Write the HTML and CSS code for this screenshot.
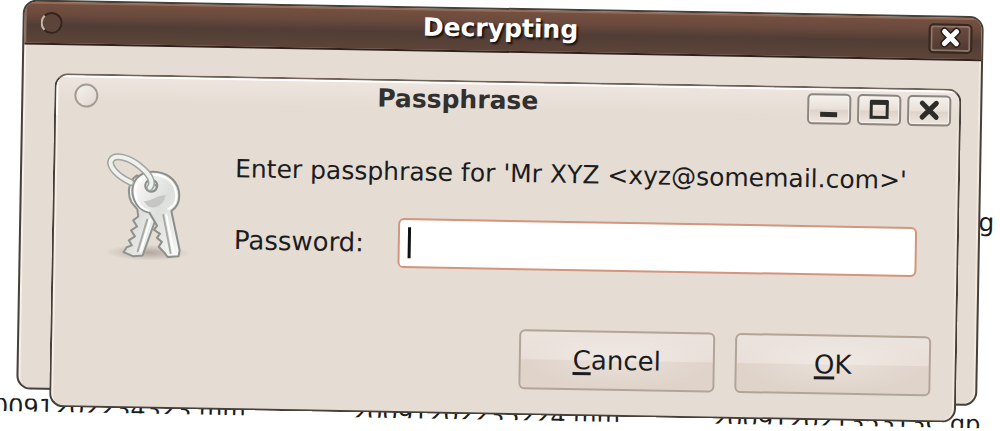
FILE: index.html
```html
<!DOCTYPE html>
<html lang="en">
<head>
<meta charset="utf-8">
<title>Passphrase</title>
<link rel="stylesheet" href="styles.css">
</head>
<body>
<main class="desktop">
  <div class="file-label">g</div>
  <div class="file-row">
    <span>0091202234323.mm</span>
    <span>20091202235224.mm</span>
    <span>20091202135313C.gp</span>
  </div>

  <section class="window window-back" aria-label="Decrypting">
    <header class="titlebar titlebar-active">
      <button class="menu-dot menu-dot-dark" aria-label="Window menu"></button>
      <h1 class="title">Decrypting</h1>
      <button class="ctl ctl-dark" aria-label="Close">
        <svg width="26" height="26" viewBox="0 0 26 26"><path d="M7 6L19 18M19 6L7 18" stroke="#2a1d18" stroke-width="8" stroke-linecap="round"/><path d="M7 6L19 18M19 6L7 18" stroke="#fff" stroke-width="5" stroke-linecap="round"/></svg>
      </button>
    </header>
  </section>

  <section class="window window-front" aria-label="Passphrase">
    <header class="titlebar">
      <button class="menu-dot" aria-label="Window menu"></button>
      <h2 class="title">Passphrase</h2>
      <div class="controls">
        <button class="ctl" aria-label="Minimize"><svg width="24" height="24" viewBox="0 0 24 24"><path d="M3 18H20" stroke="#2d2c29" stroke-width="5"/></svg></button>
        <button class="ctl" aria-label="Maximize"><svg width="24" height="24" viewBox="0 0 24 24"><path d="M4 5H20V20H4Z" fill="none" stroke="#2d2c29" stroke-width="3"/><path d="M3 5H21" stroke="#2d2c29" stroke-width="5"/></svg></button>
        <button class="ctl" aria-label="Close"><svg width="24" height="24" viewBox="0 0 24 24"><path d="M5 5L19 19M19 5L5 19" stroke="#2d2c29" stroke-width="5" stroke-linecap="round"/></svg></button>
      </div>
    </header>
    <form class="form">
      <div class="content">
        <svg class="keys" width="92" height="112" viewBox="0 0 92 112" aria-hidden="true">
          <defs>
            <linearGradient id="metal" x1="0" y1="0" x2="1" y2="1">
              <stop offset="0" stop-color="#ffffff"/><stop offset=".5" stop-color="#dddfdc"/><stop offset="1" stop-color="#f8f9f8"/>
            </linearGradient>
            <radialGradient id="shade"><stop offset="0" stop-color="#8d827a" stop-opacity=".6"/><stop offset="1" stop-color="#8d827a" stop-opacity="0"/></radialGradient>
          </defs>
          <ellipse cx="46" cy="101" rx="42" ry="8" fill="url(#shade)"/>
          <g stroke-linejoin="round" stroke-linecap="round">
            <path d="M34 24C26 29 24 42 29 51L35 58L36 65L31 69L35 75L29 79L33 85L27 89L30 94L25 96L22 101L32 105L41 104L54 66L54 34Z" fill="url(#metal)" stroke="#8f928d" stroke-width="2"/>
            <path d="M45 68L36 100" stroke="#a8aba6" stroke-width="2"/>
            <path d="M48 68L39 100" stroke="#fff" stroke-width="2"/>
            <path fill-rule="evenodd" d="M50 20C36 20 28 30 30 43C32 53 39 59 47 61L52 69L55 74L52 78L58 82L55 86L60 90L57 95L63 101L66 105L77 104L78 98L69 59C75 55 78 48 76 38C73 27 63 20 50 20ZM49 28A6 6 0 1 1 48 28Z" fill="url(#metal)" stroke="#8b8e89" stroke-width="2"/>
            <path d="M46 59C38 57 34 51 33 43C31 33 38 24 50 23C62 23 71 29 73 39C75 48 72 54 66 57" fill="none" stroke="#fff" stroke-width="2"/>
            <path d="M61 63L69 101" stroke="#a8aba6" stroke-width="2"/>
            <path d="M64 63L72 101" stroke="#fff" stroke-width="2"/>
            <path d="M41 50C50 49 53 44 63 43C62 52 54 58 46 55Z" fill="#c5c7c4"/>
          </g>
          <path d="M28 31C14 25 5 15 8 9C12 2 27 7 37 15C45 21 52 30 47 36" fill="none" stroke="#a0a59e" stroke-width="7" stroke-linecap="round"/>
          <path d="M28 31C14 25 5 15 8 9C12 2 27 7 37 15C45 21 52 30 47 36" fill="none" stroke="#eef1ed" stroke-width="4" stroke-linecap="round"/>
        </svg>
        <div class="fields">
          <p class="prompt">Enter passphrase for 'Mr XYZ &lt;xyz@somemail.com&gt;'</p>
          <div class="field">
            <label for="password">Password:</label>
            <div class="entry">
              <input id="password" type="password">
              <span class="caret"></span>
            </div>
          </div>
        </div>
      </div>
      <div class="actions">
        <button class="btn" type="button"><span><u>C</u>ancel</span></button>
        <button class="btn" type="button"><span><u>O</u>K</span></button>
      </div>
    </form>
  </section>
</main>
</body>
</html>
```

FILE: styles.css
```css
* { box-sizing: border-box; }

body {
  margin: 0;
  overflow: hidden;
  background: #fff;
  color: #1c1c1e;
  font: 25px/28px "DejaVu Sans", Verdana, sans-serif;
}

/* The whole desktop is tilted by one degree. */
.desktop {
  position: relative;
  min-height: 100vh;
  transform: rotate(1deg);
  transform-origin: 0 0;
}

.file-label {
  position: absolute;
  top: 192px;
  right: 2px;
}

.file-row {
  position: absolute;
  top: 398px;
  left: 0;
  right: 0;
  height: 13px;
  display: grid;
  grid-template-columns: 359px 360px 1fr;
  overflow: hidden;
  font-size: 24px;
  line-height: 18px;
  white-space: nowrap;
}

.window {
  position: absolute;
  border: 2px solid #46403b;
  border-radius: 14px;
  background: #e5dcd3;
  box-shadow: inset 2px 2px 0 #f8f0e8, inset -2px 0 0 #f4e9df;
  overflow: hidden;
}

.window-back {
  top: -1px;
  left: 23px;
  right: 16px;
  height: 390px;
}

.window-front {
  top: 72px;
  left: 56px;
  right: 37px;
  border-color: #46403b;
  border-top-color: #706259;
}

.titlebar {
  display: flex;
  align-items: center;
  height: 40px;
  padding: 0 8px 0 18px;
  background: linear-gradient(#eee5e0, #e5dcd3 70%);
  box-shadow: inset 2px 2px 0 #fff;
}

.titlebar-active {
  height: 43px;
  padding: 0 9px 0 16px;
  border-bottom: 2px solid #30211c;
  background: linear-gradient(#75513f, #6b4a3e 30%, #503d35 58%, #5d4439);
  box-shadow: inset 2px 2px 0 #946b59;
}

.title {
  flex: 1;
  margin: 0;
  padding: 0 0 4px 10px;
  color: #32302e;
  font-size: 25px;
  line-height: 28px;
  text-align: center;
}

.titlebar-active .title {
  color: #fff;
  text-shadow: 2px 2px 2px #17110e;
}

.menu-dot {
  width: 24px;
  height: 24px;
  padding: 0;
  border: 2px solid #a49d97;
  border-radius: 50%;
  background: linear-gradient(135deg, #f6f1ed, #e2d8cf);
}

.menu-dot-dark {
  width: 22px;
  height: 22px;
  border-color: #35251f #35251f #35251f #c4b5ad;
  background: #5c443a;
}

.controls {
  display: flex;
  gap: 6px;
}

.ctl {
  display: flex;
  align-items: center;
  justify-content: center;
  width: 44px;
  height: 31px;
  padding: 0;
  border: 2px solid #8c8680;
  border-radius: 5px;
  background: linear-gradient(#f6f1ee, #e9e0d8 50%, #ded3c9 55%, #eee6df);
  box-shadow: inset 0 0 0 1px #f8f3ef;
}

.ctl-dark {
  height: 30px;
  border-color: #382720;
  background: linear-gradient(#6d4d40, #50392f);
  box-shadow: inset 0 0 0 2px #8b756b;
}

.form { padding: 33px 24px 24px 48px; }

.content {
  display: flex;
  gap: 40px;
}

.keys {
  flex: none;
  margin-top: 2px;
}

.fields {
  flex: 1;
  min-width: 0;
  padding-right: 16px;
}

.prompt {
  margin: 4px 0 32px;
  white-space: nowrap;
}

.field {
  display: flex;
  align-items: center;
}

.field label {
  width: 164px;
  font-size: 26px;
}

.entry {
  position: relative;
  flex: 1;
}

.entry input {
  display: block;
  width: 100%;
  height: 50px;
  padding: 0 12px;
  border: 2px solid #d2957d;
  border-radius: 6px;
  outline: 0;
  background: #fff;
  font: inherit;
}

.caret {
  position: absolute;
  top: 9px;
  left: 10px;
  width: 3px;
  height: 31px;
  background: #111;
}

.actions {
  display: flex;
  justify-content: flex-end;
  gap: 20px;
  margin-top: 59px;
}

.btn {
  width: 196px;
  height: 60px;
  padding: 0;
  border: 2px solid #b3a498;
  border-radius: 6px;
  background:
    radial-gradient(ellipse at center, rgba(255, 255, 255, .3), rgba(255, 255, 255, 0) 70%),
    linear-gradient(#ebe3dd, #e9dfd8 49%, #dfd3ca 51%, #e0d3c9);
  color: inherit;
  font: inherit;
  font-size: 26px;
}

.btn u {
  text-decoration-thickness: 3px;
  text-underline-offset: 3px;
}
```
